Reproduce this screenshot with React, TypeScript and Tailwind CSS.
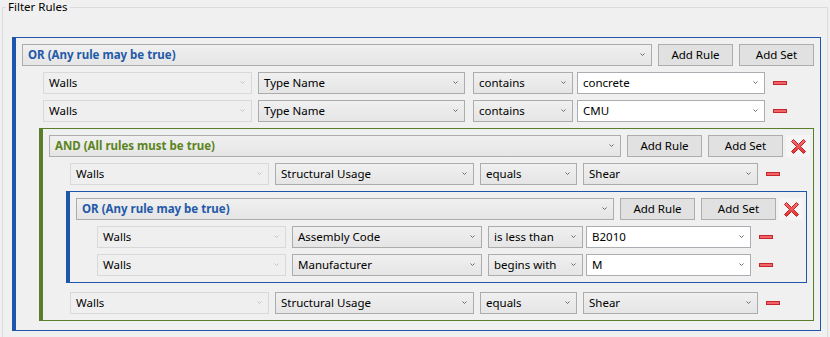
import React from "react";

type Kind = "disabled" | "list" | "edit";

const comboStyles: Record<Kind, string> = {
  disabled: "border-[#d9d9d9] bg-[#efefef]",
  list: "border-[#acacac] bg-linear-to-b from-[#f0f0f0] to-[#e5e5e5]",
  edit: "border-[#abadb3] bg-white",
};

function Chevron({ light }: { light?: boolean }) {
  return (
    <svg width="5" height="3" viewBox="0 0 5 3" className="mr-[6px] mb-[1px] shrink-0">
      <path d="M0.5 0.5 L2.5 2.5 L4.5 0.5" fill="none" stroke={light ? "#c4c4c4" : "#6b6b6b"} strokeWidth="1" />
    </svg>
  );
}

function Combo({
  text,
  kind,
  className,
  textClass,
}: {
  text: string;
  kind: Kind;
  className?: string;
  textClass?: string;
}) {
  return (
    <div className={`h-[22px] flex items-center border ${comboStyles[kind]} ${className ?? ""}`}>
      <span className={`flex-1 pl-[5px] leading-[16px] whitespace-nowrap ${textClass ?? "text-black"}`}>{text}</span>
      <Chevron light={kind === "disabled"} />
    </div>
  );
}

function Btn({ label, className }: { label: string; className?: string }) {
  return (
    <button className={`h-[22px] border border-[#adadad] bg-[#e1e1e1] text-black leading-[16px] shrink-0 ${className ?? ""}`}>
      {label}
    </button>
  );
}

function Minus() {
  return <div className="ml-[8px] w-[14px] h-[4px] border border-[#c4262b] bg-[#f26468] shrink-0" />;
}

function RemoveSet() {
  return (
    <button className="ml-[3px] w-[24px] h-[22px] flex items-center justify-center bg-[#f5f5f5] shrink-0">
      <svg width="15" height="15" viewBox="0 0 15 15">
        <defs>
          <linearGradient id="xg" x1="0" y1="0" x2="0" y2="1">
            <stop offset="0" stopColor="#f87474" />
            <stop offset="1" stopColor="#e03333" />
          </linearGradient>
        </defs>
        <polygon
          points="0.5,2.5 2.5,0.5 7.5,5.5 12.5,0.5 14.5,2.5 9.5,7.5 14.5,12.5 12.5,14.5 7.5,9.5 2.5,14.5 0.5,12.5 5.5,7.5"
          fill="url(#xg)"
          stroke="#bf2026"
          strokeWidth="1"
          strokeLinejoin="round"
        />
      </svg>
    </button>
  );
}

// column widths shrink a little with each nesting level
const levels = {
  1: { walls: "w-[209px]", field: "ml-[6px] w-[207px]", op: "ml-[8px] w-[100px]", value: "ml-[4px] w-[188px]" },
  2: { walls: "w-[199px]", field: "ml-[6px] w-[199px]", op: "ml-[6px] w-[97px]", value: "ml-[6px] w-[175px]" },
  3: { walls: "w-[189px]", field: "ml-[6px] w-[190px]", op: "ml-[6px] w-[95px]", value: "ml-[3px] w-[165px]" },
};

function Rule({
  level,
  field,
  op,
  value,
  editable,
}: {
  level: 1 | 2 | 3;
  field: string;
  op: string;
  value: string;
  editable?: boolean;
}) {
  const w = levels[level];
  return (
    <div className="ml-[21px] flex items-center">
      <Combo text="Walls" kind="disabled" className={w.walls} />
      <Combo text={field} kind="list" className={w.field} />
      <Combo text={op} kind="list" className={w.op} />
      <Combo text={value} kind={editable ? "edit" : "list"} className={w.value} />
      <Minus />
    </div>
  );
}

function RuleSet({
  mode,
  root,
  children,
}: {
  mode: "or" | "and";
  root?: boolean;
  children: React.ReactNode;
}) {
  const isOr = mode === "or";
  return (
    <div
      className={`border border-l-4 pl-[6px] pr-[6px] pt-[6px] pb-[6px] mb-[3px] flex flex-col gap-[6px] ${
        isOr ? "border-[#1d56aa]" : "border-[#5a7d2a]"
      } ${root ? "" : "ml-[17px]"}`}
    >
      <div className={`flex items-center ${root ? "" : "mr-[-3px]"}`}>
        <Combo
          text={isOr ? "OR (Any rule may be true)" : "AND (All rules must be true)"}
          kind="list"
          className="flex-1"
          textClass={`font-bold ${isOr ? "text-[#2359a8]" : "text-[#5b8421]"}`}
        />
        <Btn label="Add Rule" className="ml-[6px] w-[75px]" />
        <Btn label="Add Set" className="ml-[6px] w-[75px]" />
        {!root && <RemoveSet />}
      </div>
      {children}
    </div>
  );
}

export default function App() {
  return (
    <div className="w-[830px] h-[337px] bg-[#f0f0f0] font-['Noto_Sans',sans-serif] text-[11.5px] overflow-hidden">
      <fieldset className="mx-[2px] border border-[#dcdcdc] pb-[4px]">
        <legend className="ml-[3px] px-[2px] leading-[14px] text-black">Filter Rules</legend>
        <div className="pt-[23px] pl-[9px] pr-[6px]">
          <RuleSet mode="or" root>
            <Rule level={1} field="Type Name" op="contains" value="concrete" editable />
            <Rule level={1} field="Type Name" op="contains" value="CMU" editable />
            <RuleSet mode="and">
              <Rule level={2} field="Structural Usage" op="equals" value="Shear" />
              <RuleSet mode="or">
                <Rule level={3} field="Assembly Code" op="is less than" value="B2010" editable />
                <Rule level={3} field="Manufacturer" op="begins with" value="M" editable />
              </RuleSet>
              <Rule level={2} field="Structural Usage" op="equals" value="Shear" />
            </RuleSet>
          </RuleSet>
        </div>
      </fieldset>
    </div>
  );
}
